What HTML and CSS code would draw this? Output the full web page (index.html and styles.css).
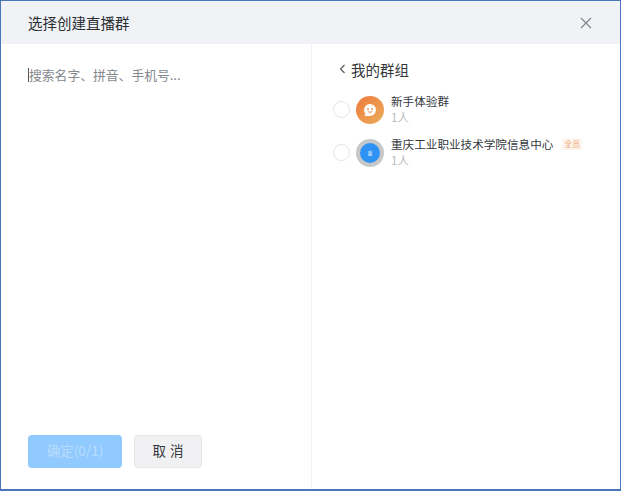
FILE: index.html
```html
<!DOCTYPE html>
<html lang="zh">
<head>
<meta charset="utf-8">
<title>选择创建直播群</title>
<link rel="stylesheet" href="styles.css">
</head>
<body>
<div class="dialog">
  <header class="head">
    <h1 class="title">选择创建直播群</h1>
    <svg class="close" width="12" height="12" viewBox="0 0 12 12"><path d="M1 1l10 10M11 1L1 11" stroke="#7b8288" stroke-width="1.1" fill="none"/></svg>
  </header>
  <div class="body">
    <section class="left">
      <div class="search"><span class="caret"></span><span>搜索名字、拼音、手机号...</span></div>
      <div class="actions">
        <button class="btn ok">确定(0/1)</button>
        <button class="btn cancel">取 消</button>
      </div>
    </section>
    <section class="right">
      <div class="crumb">
        <svg class="back" width="7" height="10" viewBox="0 0 7 10"><path d="M5.500 1L1.500 5l4 4" stroke="#555" stroke-width="1.100" fill="none"/></svg>
        <span>我的群组</span>
      </div>
      <div class="row">
        <span class="radio"></span>
        <span class="avatar orange">
          <svg width="14" height="14" viewBox="0 0 14 14"><path d="M7 1a6 6 0 0 1 6 6 6 6 0 0 1-6 6H1.500l1-2.200A6 6 0 0 1 7 1z" fill="#fff"/><circle cx="5" cy="6" r=".9" fill="#e98a45"/><circle cx="9" cy="6" r=".9" fill="#e98a45"/><path d="M4.800 8.500q2.200 1.800 4.400 0" stroke="#e98a45" fill="none"/></svg>
        </span>
        <div class="info">
          <div class="name">新手体验群</div>
          <div class="count">1人</div>
        </div>
      </div>
      <div class="row">
        <span class="radio"></span>
        <span class="avatar grey"><span class="disc">重</span></span>
        <div class="info">
          <div class="name">重庆工业职业技术学院信息中心<span class="tag">全员</span></div>
          <div class="count">1人</div>
        </div>
      </div>
    </section>
  </div>
</div>
</body>
</html>
```
FILE: styles.css
```css
* { box-sizing: border-box; }
html, body { margin: 0; height: 100%; }
body { font-family: "Noto Sans CJK SC", "Liberation Sans", sans-serif; background: #fff; }
.dialog { width: 621px; height: 491px; border: solid #4a76b8; border-width: 1px 1px 2px 1px; display: flex; flex-direction: column; background: #fff; }
.head { height: 43px; background: #f0f2f5; display: flex; align-items: center; justify-content: space-between; padding: 0 28px 0 27px; flex: none; }
.title { margin: 0; font-size: 14.500px; font-weight: 400; color: #2b2f33; }
.body { flex: 1; display: flex; min-height: 0; }
.left { width: 311px; border-right: 1px solid #f0f1f3; padding: 21px 0 21px 27px; display: flex; flex-direction: column; justify-content: space-between; }
.search { display: flex; align-items: center; font-size: 12.800px; color: #85898e; height: 20px; line-height: 20px; }
.caret { width: 1px; height: 14px; background: #555; }
.actions { display: flex; gap: 12px; }
.btn { height: 33px; border-radius: 4px; font-family: inherit; font-size: 13.500px; padding: 0 0 3px; }
.ok { width: 94px; background: #91caff; border: 0; color: #b9dcfc; }
.cancel { width: 68px; background: #f1f1f3; border: 1px solid #e6e6e8; color: #33373b; word-spacing: 1px; }
.right { flex: 1; padding: 15px 0 0 21px; }
.crumb { display: flex; align-items: center; gap: 5px; font-size: 14.500px; color: #33373b; height: 20px; padding-left: 6px; margin-bottom: 9px; }
.row { display: flex; align-items: center; height: 43px; }
.radio { width: 17px; height: 17px; border: 1px solid #e3e5e7; border-radius: 50%; margin-right: 6px; flex: none; }
.avatar { width: 28px; height: 28px; border-radius: 50%; margin-right: 7px; display: flex; align-items: center; justify-content: center; flex: none; }
.orange { background: linear-gradient(135deg, #ee7a3d, #ecae5c); }
.grey { background: #c6c8ca; }
.disc { width: 20px; height: 20px; border-radius: 50%; background: #2f93f5; color: #cfe6fb; font-size: 5px; display: flex; align-items: center; justify-content: center; }
.info { min-width: 0; margin-top: -2px; }
.name { font-size: 11.600px; line-height: 16px; color: #34383d; display: flex; align-items: center; white-space: nowrap; }
.count { font-size: 11.500px; line-height: 16px; color: #b8bbbe; }
.tag { margin-left: 9px; padding: 0 2px; height: 12px; line-height: 12px; font-size: 8px; color: #f2a977; background: #fdf5ef; border-radius: 3px; }
```
